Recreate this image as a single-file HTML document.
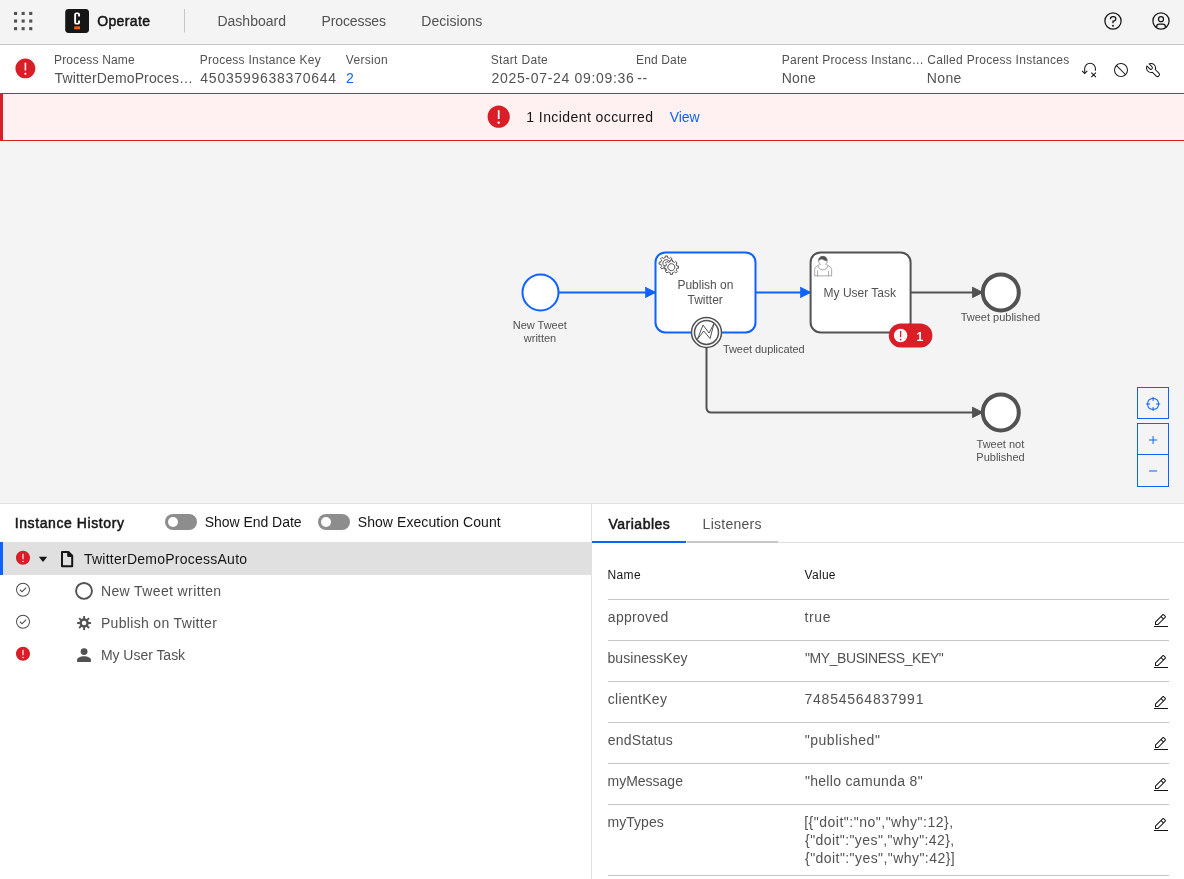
<!DOCTYPE html>
<html lang="en">
<head>
<meta charset="utf-8">
<title>Operate: Process Instance 4503599638370644 of TwitterDemoProcessAuto</title>
<style>
html,body{margin:0;padding:0}
body{width:1184px;height:879px;overflow:hidden;background:#fff;position:relative;font-family:"Liberation Sans",sans-serif}
#app{position:absolute;left:0;top:0;width:1184px;height:879px;overflow:hidden;will-change:transform}
.abs{position:absolute;display:block;overflow:visible}
.t{position:absolute;white-space:pre;line-height:20px;font-weight:400}
.hdr{position:absolute;left:0;top:0;width:1184px;height:44px;background:#f4f4f4;border-bottom:1px solid #c6c6c6}
.ihdr{position:absolute;left:0;top:45px;width:1184px;height:48px;background:#fff}
.banner{position:absolute;left:0;top:93px;width:1181px;height:46px;background:#fff1f1;border-top:1px solid #da1e28;border-bottom:1px solid #da1e28;border-left:3px solid #da1e28}
.diagram{position:absolute;left:0;top:141px;width:1184px;height:362px;background:#f4f4f4}
.bottom{position:absolute;left:0;top:503px;width:1184px;height:375px;background:#fff;border-top:1px solid #e0e0e0}
.vsplit{position:absolute;left:591px;top:504px;width:1px;height:375px;background:#e0e0e0}
.toggle{position:absolute;width:32px;height:16px;border-radius:8px;background:#8d8d8d}
.toggle i{position:absolute;left:3px;top:3px;width:10px;height:10px;border-radius:5px;background:#fff}
.rowsel{position:absolute;left:0;top:542px;width:588px;height:33px;background:#e0e0e0;border-left:3px solid #0f62fe}
.tabline{position:absolute;left:592px;top:542px;width:592px;height:1px;background:#e0e0e0}
.tabsel{position:absolute;left:592px;top:541px;width:94px;height:2px;background:#0f62fe}
.tabuns{position:absolute;left:687px;top:541px;width:91px;height:2px;background:#c6c6c6}
.rl{position:absolute;left:608px;width:561px;height:1px;background:#c6c6c6}
.g{display:contents}
a.t{text-decoration:none}
</style>
</head>
<body>
<div id="app">
<header class="g">
<!-- ===== top header ===== -->
<div class="hdr"></div>
<svg class="abs" style="left:0;top:0" width="200" height="45" viewBox="0 0 200 45">
  <g fill="#525252">
    <rect x="14.0" y="11.9" width="3.1" height="3.1"/><rect x="21.6" y="11.9" width="3.1" height="3.1"/><rect x="29.2" y="11.9" width="3.1" height="3.1"/>
    <rect x="14.0" y="19.5" width="3.1" height="3.1"/><rect x="21.6" y="19.5" width="3.1" height="3.1"/><rect x="29.2" y="19.5" width="3.1" height="3.1"/>
    <rect x="14.0" y="27.1" width="3.1" height="3.1"/><rect x="21.6" y="27.1" width="3.1" height="3.1"/><rect x="29.2" y="27.1" width="3.1" height="3.1"/>
  </g>
  <rect x="65.2" y="9" width="23.8" height="24" rx="3.4" fill="#161616"/>
  <path d="M80,16.600 V14.600 a2.200,2.200 0 0 0 -2.200,-2.200 h-1.400 a2.200,2.200 0 0 0 -2.200,2.200 V22.400 a2.200,2.200 0 0 0 2.200,2.200 h1.400 a2.200,2.200 0 0 0 2.200,-2.200 V20.400 h-1.900 V22.300 a0.600,0.600 0 0 1 -0.600,0.600 h-0.800 a0.600,0.600 0 0 1 -0.600,-0.600 V14.700 a0.600,0.600 0 0 1 0.600,-0.600 h0.800 a0.600,0.600 0 0 1 0.600,0.600 V16.600 z" fill="#fff"/>
  <rect x="74.2" y="26.4" width="5.8" height="2.9" fill="#fc5d0d"/>
  <rect x="184" y="9" width="1" height="23.5" fill="#c6c6c6"/>
</svg>
<svg class="abs" style="left:1103.1px;top:11px" width="20" height="20" viewBox="0 0 32 32" fill="#161616">
  <path d="M16,2A14,14,0,1,0,30,16,14,14,0,0,0,16,2Zm0,26A12,12,0,1,1,28,16,12,12,0,0,1,16,28Z"/><circle cx="16" cy="23.5" r="1.5"/><path d="M17,8H15.5A4.49,4.49,0,0,0,11,12.5V13h2v-.5A2.5,2.5,0,0,1,15.500,10H17a2.5,2.5,0,0,1,0,5H15v4.500h2V17a4.500,4.500,0,0,0,0-9Z"/>
</svg>
<svg class="abs" style="left:1151.1px;top:11px" width="20" height="20" viewBox="0 0 32 32" fill="#161616">
  <path d="M16,8a5,5,0,1,0,5,5A5,5,0,0,0,16,8Zm0,8a3,3,0,1,1,3-3A3.0034,3.0034,0,0,1,16,16Z"/><path d="M16,2A14,14,0,1,0,30,16,14.0158,14.0158,0,0,0,16,2ZM10,26.3765V25a3.0033,3.0033,0,0,1,3-3h6a3.0033,3.0033,0,0,1,3,3v1.3765a11.8989,11.8989,0,0,1-12,0Zm13.9925-1.4507A5.0016,5.0016,0,0,0,19,20H13a5.0016,5.0016,0,0,0-4.9925,4.9258,12,12,0,1,1,15.985,0Z"/>
</svg>

<nav class="g">
<span class="t" style="left:97.23px;top:11px;font-size:14px;-webkit-text-stroke:0.5px #161616;color:#161616;letter-spacing:0.356px">Operate</span>
<a class="t" style="left:217.42px;top:11px;font-size:14.0px;color:#525252;letter-spacing:0.021px">Dashboard</a>
<a class="t" style="left:321.42px;top:11px;font-size:14.0px;color:#525252;letter-spacing:-0.094px">Processes</a>
<a class="t" style="left:421.32px;top:11px;font-size:14.0px;color:#525252;letter-spacing:0.043px">Decisions</a>
</nav>
</header>
<main class="g">
<section class="g">
<!-- ===== instance header ===== -->
<div class="ihdr"></div>
<svg class="abs" style="left:14.05px;top:56.95px" width="22.8" height="22.8" viewBox="0 0 32 32"><circle cx="16" cy="16" r="12" fill="#fff"/><path fill="#da1e28" d="M16,2C8.3,2,2,8.3,2,16s6.300,14,14,14s14-6.300,14-14C30,8.300,23.700,2,16,2z M14.900,8h2.200v11h-2.200V8z M16,25c-0.800,0-1.500-0.700-1.500-1.500S15.200,22,16,22c0.800,0,1.500,0.700,1.500,1.500S16.800,25,16,25z"/></svg>
<!-- retry -->
<svg class="abs" style="left:1078px;top:58px" width="24" height="24" viewBox="1078 58 24 24" fill="none" stroke="#161616" stroke-width="1.05">
  <path d="M1084.7,73.3 V68.55 A5.35,5.35 0 0 1 1095.4,68.55 V70.7"/>
  <path d="M1082.1,70.9 L1084.7,73.5 L1087.3,70.9"/>
  <path d="M1091.3,72.6 L1095.9,77.2 M1095.9,72.6 L1091.3,77.200"/>
</svg>
<!-- cancel -->
<svg class="abs" style="left:1113.1px;top:61.9px" width="16" height="16" viewBox="0 0 32 32" fill="#161616">
  <path d="M2,16H2A14,14,0,1,0,16,2,14,14,0,0,0,2,16Zm23.150,7.750L8.250,6.850a12,12,0,0,1,16.900,16.900ZM8.240,25.160A12,12,0,0,1,6.840,8.270L23.730,25.160a12,12,0,0,1-15.490,0Z"/>
</svg>
<!-- wrench -->
<svg class="abs" style="left:1145.2px;top:61.8px" width="16" height="16" viewBox="0 0 32 32" fill="#161616">
  <path d="M12.100,2A9.800,9.800,0,0,0,6.700,3.600L13.100,10a2.100,2.100,0,0,1,.2,3,2.100,2.100,0,0,1-3-.2L3.700,6.400A9.840,9.840,0,0,0,2,12.100,10.140,10.140,0,0,0,12.100,22.200a10.900,10.900,0,0,0,2.600-.3l6.700,6.700a5,5,0,0,0,7.100-7.100l-6.700-6.700a10.900,10.900,0,0,0,.3-2.600A10,10,0,0,0,12.100,2Zm8,10.100a7.610,7.610,0,0,1-.3,2.100l-.3,1.100.8.800L27,22.800a2.880,2.880,0,0,1,.9,2.100A2.720,2.720,0,0,1,27,27a2.900,2.900,0,0,1-4.200,0l-6.700-6.700-.8-.8-1.100.3a7.610,7.610,0,0,1-2.100.3,8.270,8.270,0,0,1-5.700-2.300A7.630,7.630,0,0,1,4,12.100a8.330,8.330,0,0,1,.3-2.200l4.400,4.400a4.140,4.140,0,0,0,5.900.2,4.140,4.140,0,0,0-.2-5.900L10,4.200a6.450,6.450,0,0,1,2-.3,8.270,8.270,0,0,1,5.700,2.300A8.490,8.490,0,0,1,20.100,12.100Z"/>
</svg>

<span class="t" style="left:54.00px;top:50px;font-size:12.0px;color:#525252;letter-spacing:0.184px">Process Name</span>
<span class="t" style="left:54.47px;top:68px;font-size:14.0px;color:#525252;letter-spacing:0.145px">TwitterDemoProces…</span>
<span class="t" style="left:199.70px;top:50px;font-size:12.0px;color:#525252;letter-spacing:0.26px">Process Instance Key</span>
<span class="t" style="left:200.35px;top:68px;font-size:14.0px;color:#525252;letter-spacing:0.74px">4503599638370644</span>
<span class="t" style="left:345.85px;top:50px;font-size:12.0px;color:#525252;letter-spacing:0.317px">Version</span>
<a class="t" style="left:345.99px;top:68px;font-size:14.0px;color:#0f62fe;letter-spacing:0.0px">2</a>
<span class="t" style="left:490.81px;top:50px;font-size:12.0px;color:#525252;letter-spacing:0.323px">Start Date</span>
<span class="t" style="left:491.49px;top:68px;font-size:14.0px;color:#525252;letter-spacing:0.682px">2025-07-24 09:09:36</span>
<span class="t" style="left:636.10px;top:50px;font-size:12.0px;color:#525252;letter-spacing:0.131px">End Date</span>
<span class="t" style="left:637.26px;top:68px;font-size:14.0px;color:#525252;letter-spacing:0.567px">--</span>
<span class="t" style="left:781.70px;top:50px;font-size:12.0px;color:#525252;letter-spacing:0.271px">Parent Process Instanc…</span>
<span class="t" style="left:781.82px;top:68px;font-size:14.0px;color:#525252;letter-spacing:0.153px">None</span>
<span class="t" style="left:927.26px;top:50px;font-size:12.0px;color:#525252;letter-spacing:0.289px">Called Process Instances</span>
<span class="t" style="left:926.72px;top:68px;font-size:14.0px;color:#525252;letter-spacing:0.394px">None</span>
</section>
<section class="g">
<!-- ===== incident banner ===== -->
<div class="banner"></div>
<svg class="abs" style="left:486.15px;top:104.3px" width="25.4" height="25.4" viewBox="0 0 32 32"><circle cx="16" cy="16" r="12" fill="#fff"/><path fill="#da1e28" d="M16,2C8.3,2,2,8.3,2,16s6.300,14,14,14s14-6.300,14-14C30,8.300,23.700,2,16,2z M14.900,8h2.200v11h-2.200V8z M16,25c-0.800,0-1.500-0.700-1.500-1.500S15.200,22,16,22c0.800,0,1.500,0.700,1.500,1.500S16.800,25,16,25z"/></svg>
<span class="t" style="left:526.32px;top:107px;font-size:14.0px;color:#161616;letter-spacing:0.421px">1 Incident occurred</span>
<a class="t" style="left:669.82px;top:107px;font-size:14.0px;color:#0f62fe;letter-spacing:-0.095px">View</a>
</section>
<section class="g">
<!-- ===== diagram ===== -->
<div class="diagram"></div>
<svg class="abs" style="left:0;top:141px" width="1184" height="362" viewBox="0 141 1184 362" font-family="'Liberation Sans', Arial, sans-serif">
  <defs>
    <marker id="mk-b" viewBox="0 0 20 20" refX="11" refY="10" markerWidth="10" markerHeight="10" orient="auto">
      <path d="M 1 5 L 11 10 L 1 15 Z" fill="#0f62fe" stroke="#0f62fe" stroke-width="1" stroke-linecap="round"/>
    </marker>
    <marker id="mk-g" viewBox="0 0 20 20" refX="11" refY="10" markerWidth="10" markerHeight="10" orient="auto">
      <path d="M 1 5 L 11 10 L 1 15 Z" fill="#525252" stroke="#525252" stroke-width="1" stroke-linecap="round"/>
    </marker>
  </defs>
  <!-- sequence flows -->
  <g fill="none" stroke-width="2" stroke-linejoin="round" stroke-linecap="round">
    <path d="M558.5,292.4 L655.5,292.4" stroke="#0f62fe" marker-end="url(#mk-b)"/>
    <path d="M755.5,292.4 L810.6,292.4" stroke="#0f62fe" marker-end="url(#mk-b)"/>
    <path d="M910.6,292.4 L982.8,292.4" stroke="#525252" marker-end="url(#mk-g)"/>
    <path d="M706.5,347.4 L706.5,407.4 Q706.5,412.4 711.5,412.4 L982.8,412.4" stroke="#525252" marker-end="url(#mk-g)"/>
  </g>
  <!-- start event -->
  <circle cx="540.5" cy="292.4" r="18" fill="#fff" stroke="#0f62fe" stroke-width="2"/>
  <text font-size="11" fill="#525252" text-anchor="middle"><tspan x="539.8" y="329">New Tweet</tspan><tspan x="540" y="341.7">written</tspan></text>
  <!-- service task -->
  <g transform="translate(655.5 252.4)">
    <rect x="0" y="0" width="100" height="80" rx="10" ry="10" fill="#fff" stroke="#0f62fe" stroke-width="2"/>
    <path d="m 12,18 v -1.71335 c 0.352326,-0.0705 0.703932,-0.17838 1.047628,-0.32133 0.344416,-0.14465 0.665822,-0.32133 0.966377,-0.52145 l 1.19431,1.18005 1.567487,-1.57688 -1.195028,-1.18014 c 0.403376,-0.61394 0.683079,-1.29908 0.825447,-2.01824 l 1.622133,-0.01 v -2.2196 l -1.636514,0.01 c -0.07333,-0.35153 -0.178319,-0.70024 -0.323564,-1.04372 -0.145244,-0.34406 -0.321407,-0.6644 -0.522735,-0.96217 l 1.131035,-1.13631 -1.583305,-1.56293 -1.129598,1.13589 c -0.614052,-0.40108 -1.302883,-0.68093 -2.022633,-0.82247 l 0.0093,-1.61852 h -2.241173 l 0.0042,1.63124 c -0.353763,0.0736 -0.705369,0.17977 -1.049785,0.32371 -0.344415,0.14437 -0.665102,0.32092 -0.9635006,0.52046 l -1.1698628,-1.15823 -1.5667691,1.5792 1.1684265,1.15669 c -0.4026573,0.61283 -0.68308,1.29797 -0.8247287,2.01713 l -1.6588041,0.003 v 2.22174 l 1.6724648,-0.006 c 0.073327,0.35077 0.1797598,0.70243 0.3242851,1.04472 0.1452428,0.34448 0.3214064,0.6644 0.5227339,0.96066 l -1.1993431,1.19723 1.5840256,1.56011 1.1964668,-1.19348 c 0.6140517,0.40346 1.3028827,0.68232 2.0233517,0.82331 l 7.19e-4,1.69892 h 2.226848 z m 0.221462,-3.9957 c -1.788948,0.7502 -3.8576,-0.0928 -4.6097055,-1.87438 -0.7521065,-1.78321 0.090598,-3.84627 1.8802645,-4.59604 1.78823,-0.74936 3.856881,0.0929 4.608987,1.87437 0.752106,1.78165 -0.0906,3.84612 -1.879546,4.59605 z" fill="#fff" stroke="#525252" stroke-width="1"/>
    <path d="m 17.2,18 c -1.788948,0.7502 -3.8576,-0.0928 -4.6097055,-1.87438 -0.7521065,-1.78321 0.090598,-3.84627 1.8802645,-4.59604 1.78823,-0.74936 3.856881,0.0929 4.608987,1.87437 0.752106,1.78165 -0.0906,3.84612 -1.879546,4.59605 z" fill="#fff" stroke="none"/>
    <path d="m 17,22 v -1.71335 c 0.352326,-0.0705 0.703932,-0.17838 1.047628,-0.32133 0.344416,-0.14465 0.665822,-0.32133 0.966377,-0.52145 l 1.19431,1.18005 1.567487,-1.57688 -1.195028,-1.18014 c 0.403376,-0.61394 0.683079,-1.29908 0.825447,-2.01824 l 1.622133,-0.01 v -2.2196 l -1.636514,0.01 c -0.07333,-0.35153 -0.178319,-0.70024 -0.323564,-1.04372 -0.145244,-0.34406 -0.321407,-0.6644 -0.522735,-0.96217 l 1.131035,-1.13631 -1.583305,-1.56293 -1.129598,1.13589 c -0.614052,-0.40108 -1.302883,-0.68093 -2.022633,-0.82247 l 0.0093,-1.61852 h -2.241173 l 0.0042,1.63124 c -0.353763,0.0736 -0.705369,0.17977 -1.049785,0.32371 -0.344415,0.14437 -0.665102,0.32092 -0.9635006,0.52046 l -1.1698628,-1.15823 -1.5667691,1.5792 1.1684265,1.15669 c -0.4026573,0.61283 -0.68308,1.29797 -0.8247287,2.01713 l -1.6588041,0.003 v 2.22174 l 1.6724648,-0.006 c 0.073327,0.35077 0.1797598,0.70243 0.3242851,1.04472 0.1452428,0.34448 0.3214064,0.6644 0.5227339,0.96066 l -1.1993431,1.19723 1.5840256,1.56011 1.1964668,-1.19348 c 0.6140517,0.40346 1.3028827,0.68232 2.0233517,0.82331 l 7.19e-4,1.69892 h 2.226848 z m 0.221462,-3.9957 c -1.788948,0.7502 -3.8576,-0.0928 -4.6097055,-1.87438 -0.7521065,-1.78321 0.090598,-3.84627 1.8802645,-4.59604 1.78823,-0.74936 3.856881,0.0929 4.608987,1.87437 0.752106,1.78165 -0.0906,3.84612 -1.879546,4.59605 z" fill="#fff" stroke="#525252" stroke-width="1"/>
  </g>
  <text font-size="12" fill="#525252" text-anchor="middle"><tspan x="705.4" y="288.7">Publish on</tspan><tspan x="705.2" y="303.8">Twitter</tspan></text>
  <!-- user task -->
  <g transform="translate(810.6 252.4)">
    <rect x="0" y="0" width="100" height="80" rx="10" ry="10" fill="#fff" stroke="#525252" stroke-width="2"/>
    <path d="m 15,12 c 0.909,-0.845 1.594,-2.049 1.594,-3.385 0,-2.554 -1.805,-4.62199999 -4.357,-4.62199999 -2.55199998,0 -4.28799998,2.06799999 -4.28799998,4.62199999 0,1.348 0.974,2.562 1.89599998,3.405 -0.52899998,0.187 -5.669,2.097 -5.794,4.7560005 v 6.718 h 17 v -6.718 c 0,-2.2980005 -5.5279996,-4.5950005 -6.0509996,-4.7760005 z m -8,6 l 0,5.5 m 11,0 l 0,-5" fill="#fff" stroke="#525252" stroke-width="0.5"/>
    <path d="m 15,12 m 2.162,1.009 c 0,2.4470005 -2.158,4.4310005 -4.821,4.4310005 -2.66499998,0 -4.822,-1.981 -4.822,-4.4310005 " fill="#fff" stroke="#525252" stroke-width="0.5"/>
    <path d="m 15,12 m -6.9,-3.80 c 0,0 2.25099998,-2.358 4.27399998,-1.177 2.024,1.181 4.221,1.537 4.124,0.965 -0.098,-0.57 -0.117,-3.79099999 -4.191,-4.13599999 -3.57499998,0.001 -4.20799998,3.36699999 -4.20699998,4.34799999 z" fill="#525252" stroke="#525252" stroke-width="0.5"/>
  </g>
  <text font-size="12" fill="#525252" text-anchor="middle" x="859.8" y="296.7">My User Task</text>
  <!-- end events -->
  <circle cx="1000.8" cy="292.4" r="18" fill="#fff" stroke="#525252" stroke-width="4"/>
  <text font-size="11" fill="#525252" text-anchor="middle" x="1000.4" y="321">Tweet published</text>
  <circle cx="1000.8" cy="412.4" r="18" fill="#fff" stroke="#525252" stroke-width="4"/>
  <text font-size="11" fill="#525252" text-anchor="middle"><tspan x="1000.4" y="447.8">Tweet not</tspan><tspan x="1000.5" y="461">Published</tspan></text>
  <!-- boundary error event -->
  <g transform="translate(691.5 317.4)">
    <circle cx="15" cy="15" r="15" fill="#fff" stroke="#525252" stroke-width="1.5"/>
    <circle cx="15" cy="15" r="12" fill="none" stroke="#525252" stroke-width="1.5"/>
    <path d="m 6,21.66 0.078,-0.021 6.116,-8.009 6.389,7.472 3.917,-15.184 -4.892,9.708 -6.083,-7.988 z" fill="#fff" stroke="#525252" stroke-width="1"/>
  </g>
  <text font-size="11" fill="#525252" x="722.9" y="353.2" letter-spacing="-0.05">Tweet duplicated</text>
  <!-- incident badge -->
  <rect x="888.8" y="323.4" width="43.6" height="24.2" rx="12.1" fill="#da1e28"/>
  <circle cx="900.6" cy="335.5" r="6.7" fill="#fff"/>
  <rect x="899.95" y="331" width="1.3" height="6.2" fill="#da1e28"/>
  <rect x="899.85" y="338.8" width="1.5" height="1.6" fill="#da1e28"/>
  <text font-size="12" font-weight="700" fill="#fff" x="916.6" y="340.7">1</text>
  <!-- zoom controls -->
  <g fill="#f4f4f4" stroke="#0f62fe" stroke-width="1">
    <rect x="1137.5" y="387.5" width="31" height="31"/>
    <rect x="1137.5" y="423.5" width="31" height="31"/>
    <rect x="1137.5" y="454.5" width="31" height="32"/>
  </g>
  <svg x="1145.1" y="395.9" width="16" height="16" viewBox="0 0 32 32" fill="#0f62fe">
    <path d="M30,15H27.949A12.007,12.007,0,0,0,17,4.051V2H15V4.051A12.007,12.007,0,0,0,4.051,15H2v2H4.051A12.007,12.007,0,0,0,15,27.949V30h2V27.949A12.007,12.007,0,0,0,27.949,17H30ZM17,25.949V22H15v3.949A10.017,10.017,0,0,1,6.051,17H10V15H6.051A10.017,10.017,0,0,1,15,6.051V10h2V6.051A10.017,10.017,0,0,1,25.949,15H22v2h3.949A10.017,10.017,0,0,1,17,25.949Z"/>
  </svg>
  <svg x="1145.1" y="432" width="16" height="16" viewBox="0 0 32 32" fill="#0f62fe"><path d="M17 15L17 8 15 8 15 15 8 15 8 17 15 17 15 24 17 24 17 17 24 17 24 15z"/></svg>
  <svg x="1145.1" y="463" width="16" height="16" viewBox="0 0 32 32" fill="#0f62fe"><path d="M8 15H24V17H8z"/></svg>
</svg>
</section>
<section class="g">
<!-- ===== bottom panel ===== -->
<div class="bottom"></div>
<div class="vsplit"></div>
<!-- instance history -->
<div class="toggle" style="left:165px;top:514px"><i></i></div>
<div class="toggle" style="left:318px;top:514px"><i></i></div>
<div class="rowsel"></div>
<svg class="abs" style="left:0;top:540px" width="110" height="130" viewBox="0 540 110 130">
  <!-- state icons -->
  <svg x="15" y="549.8" width="16" height="16" viewBox="0 0 32 32"><circle cx="16" cy="16" r="12" fill="#fff"/><path fill="#da1e28" d="M16,2C8.3,2,2,8.3,2,16s6.300,14,14,14s14-6.300,14-14C30,8.300,23.700,2,16,2z M14.900,8h2.200v11h-2.200V8z M16,25c-0.800,0-1.500-0.700-1.500-1.500S15.200,22,16,22c0.800,0,1.500,0.700,1.500,1.500S16.800,25,16,25z"/></svg>
  <svg x="15" y="581.8" width="16" height="16" viewBox="0 0 32 32"><path fill="#4a4a4a" d="M14 21.414L9 16.413 10.413 15 14 18.586 21.585 11 23 12.415 14 21.414z M16,2A14,14,0,1,0,30,16,14,14,0,0,0,16,2Zm0,26A12,12,0,1,1,28,16,12,12,0,0,1,16,28Z"/></svg>
  <svg x="15" y="613.8" width="16" height="16" viewBox="0 0 32 32"><path fill="#4a4a4a" d="M14 21.414L9 16.413 10.413 15 14 18.586 21.585 11 23 12.415 14 21.414z M16,2A14,14,0,1,0,30,16,14,14,0,0,0,16,2Zm0,26A12,12,0,1,1,28,16,12,12,0,0,1,16,28Z"/></svg>
  <svg x="15" y="645.8" width="16" height="16" viewBox="0 0 32 32"><circle cx="16" cy="16" r="12" fill="#fff"/><path fill="#da1e28" d="M16,2C8.3,2,2,8.3,2,16s6.300,14,14,14s14-6.300,14-14C30,8.300,23.700,2,16,2z M14.900,8h2.200v11h-2.200V8z M16,25c-0.800,0-1.500-0.700-1.500-1.500S15.200,22,16,22c0.800,0,1.500,0.700,1.500,1.500S16.800,25,16,25z"/></svg>
  <!-- caret -->
  <path d="M38.8,556.8 L47.2,556.8 L43,562 Z" fill="#161616"/>
  <!-- document -->
  <path d="M62,552 H68.400 L72.200,555.800 V566.200 H62 Z M68.200,552.200 V556 H72" fill="none" stroke="#161616" stroke-width="2" stroke-linejoin="round"/>
  <!-- start event icon -->
  <circle cx="84" cy="590.9" r="7.95" fill="none" stroke="#525252" stroke-width="1.9"/>
  <!-- gear icon -->
  <g transform="translate(84.1 623.05)" fill="#525252">
    <rect x="-0.95" y="-7" width="1.9" height="14"/>
    <rect x="-0.95" y="-7" width="1.9" height="14" transform="rotate(45)"/>
    <rect x="-0.95" y="-7" width="1.9" height="14" transform="rotate(90)"/>
    <rect x="-0.95" y="-7" width="1.9" height="14" transform="rotate(135)"/>
    <circle r="4.7"/>
    <circle r="2.3" fill="#fff"/>
  </g>
  <!-- user icon -->
  <g fill="#525252">
    <circle cx="84.1" cy="651.6" r="3.45"/>
    <path d="M77.100,662 V659.800 C77.100,657.500 81,656.200 84,656.200 C87,656.200 90.900,657.500 90.900,659.800 V662 Z"/>
  </g>
</svg>
<span class="t" style="left:14.77px;top:513px;font-size:14px;-webkit-text-stroke:0.5px #161616;color:#161616;letter-spacing:0.587px">Instance History</span>
<span class="t" style="left:204.73px;top:512px;font-size:14.0px;color:#161616;letter-spacing:-0.037px">Show End Date</span>
<span class="t" style="left:357.73px;top:512px;font-size:14.0px;color:#161616;letter-spacing:0.071px">Show Execution Count</span>
<span class="t" style="left:83.97px;top:549px;font-size:14.0px;color:#161616;letter-spacing:0.246px">TwitterDemoProcessAuto</span>
<span class="t" style="left:100.92px;top:581px;font-size:14.0px;color:#525252;letter-spacing:0.381px">New Tweet written</span>
<span class="t" style="left:100.92px;top:613px;font-size:14.0px;color:#525252;letter-spacing:0.332px">Publish on Twitter</span>
<span class="t" style="left:100.92px;top:645px;font-size:14.0px;color:#525252;letter-spacing:-0.031px">My User Task</span>
</section>
<section class="g">
<!-- variables panel -->
<div class="tabline"></div>
<div class="tabsel"></div>
<div class="tabuns"></div>
<div class="rl" style="top:599px"></div>
<div class="rl" style="top:640px"></div>
<div class="rl" style="top:681px"></div>
<div class="rl" style="top:722px"></div>
<div class="rl" style="top:763px"></div>
<div class="rl" style="top:804px"></div>
<div class="rl" style="top:875px"></div>
<span class="t" style="left:608.49px;top:514px;font-size:14px;-webkit-text-stroke:0.5px #161616;color:#161616;letter-spacing:0.504px">Variables</span>
<span class="t" style="left:702.62px;top:514px;font-size:14.0px;color:#525252;letter-spacing:0.267px">Listeners</span>
<span class="t" style="left:607.50px;top:565px;font-size:12.0px;color:#161616;letter-spacing:0.388px">Name</span>
<span class="t" style="left:804.55px;top:565px;font-size:12.0px;color:#161616;letter-spacing:0.296px">Value</span>
<span class="t" style="left:607.85px;top:607px;font-size:14.0px;color:#525252;letter-spacing:0.289px">approved</span>
<span class="t" style="left:804.56px;top:607px;font-size:14.0px;color:#525252;letter-spacing:0.619px">true</span>
<span class="t" style="left:607.50px;top:648px;font-size:14.0px;color:#525252;letter-spacing:0.061px">businessKey</span>
<span class="t" style="left:804.88px;top:648px;font-size:14.0px;color:#525252;letter-spacing:-0.4px">"MY_BUSINESS_KEY"</span>
<span class="t" style="left:607.85px;top:689px;font-size:14.0px;color:#525252;letter-spacing:0.279px">clientKey</span>
<span class="t" style="left:804.48px;top:689px;font-size:14.0px;color:#525252;letter-spacing:0.768px">74854564837991</span>
<span class="t" style="left:607.85px;top:730px;font-size:14.0px;color:#525252;letter-spacing:0.223px">endStatus</span>
<span class="t" style="left:804.68px;top:730px;font-size:14.0px;color:#525252;letter-spacing:0.532px">"published"</span>
<span class="t" style="left:607.50px;top:771px;font-size:14.0px;color:#525252;letter-spacing:-0.007px">myMessage</span>
<span class="t" style="left:804.88px;top:771px;font-size:14.0px;color:#525252;letter-spacing:0.317px">"hello camunda 8"</span>
<span class="t" style="left:607.50px;top:812px;font-size:14.0px;color:#525252;letter-spacing:0.04px">myTypes</span>
<span class="t" style="left:804.20px;top:812px;font-size:14.0px;color:#525252;letter-spacing:0.506px">[{"doit":"no","why":12},</span>
<span class="t" style="left:805.05px;top:830px;font-size:14.0px;color:#525252;letter-spacing:0.42px">{"doit":"yes","why":42},</span>
<span class="t" style="left:805.05px;top:848px;font-size:14.0px;color:#525252;letter-spacing:0.436px">{"doit":"yes","why":42}]</span>
<svg class="abs" style="left:1153.1px;top:612.9px" width="16" height="16" viewBox="0 0 32 32" fill="#161616"><path d="M2 26H30V28H2zM25.400 9c.8-.8.8-2 0-2.800 0 0 0 0 0 0l-3.600-3.600c-.8-.8-2-.8-2.800 0 0 0 0 0 0 0l-15 15V24h6.400L25.400 9zM20.400 4L24 7.600l-3 3L17.400 7 20.400 4zM6 22v-3.600l10-10 3.600 3.600-10 10H6z"/></svg><svg class="abs" style="left:1153.1px;top:653.8px" width="16" height="16" viewBox="0 0 32 32" fill="#161616"><path d="M2 26H30V28H2zM25.400 9c.8-.8.8-2 0-2.800 0 0 0 0 0 0l-3.600-3.600c-.8-.8-2-.8-2.800 0 0 0 0 0 0 0l-15 15V24h6.400L25.400 9zM20.400 4L24 7.600l-3 3L17.400 7 20.400 4zM6 22v-3.600l10-10 3.600 3.600-10 10H6z"/></svg><svg class="abs" style="left:1153.1px;top:694.7px" width="16" height="16" viewBox="0 0 32 32" fill="#161616"><path d="M2 26H30V28H2zM25.400 9c.8-.8.8-2 0-2.800 0 0 0 0 0 0l-3.600-3.600c-.8-.8-2-.8-2.800 0 0 0 0 0 0 0l-15 15V24h6.400L25.400 9zM20.400 4L24 7.600l-3 3L17.400 7 20.400 4zM6 22v-3.600l10-10 3.600 3.600-10 10H6z"/></svg><svg class="abs" style="left:1153.1px;top:735.6px" width="16" height="16" viewBox="0 0 32 32" fill="#161616"><path d="M2 26H30V28H2zM25.400 9c.8-.8.8-2 0-2.800 0 0 0 0 0 0l-3.600-3.600c-.8-.8-2-.8-2.800 0 0 0 0 0 0 0l-15 15V24h6.400L25.400 9zM20.400 4L24 7.600l-3 3L17.400 7 20.400 4zM6 22v-3.600l10-10 3.600 3.600-10 10H6z"/></svg><svg class="abs" style="left:1153.1px;top:776.5px" width="16" height="16" viewBox="0 0 32 32" fill="#161616"><path d="M2 26H30V28H2zM25.400 9c.8-.8.8-2 0-2.800 0 0 0 0 0 0l-3.600-3.600c-.8-.8-2-.8-2.800 0 0 0 0 0 0 0l-15 15V24h6.400L25.400 9zM20.400 4L24 7.600l-3 3L17.400 7 20.400 4zM6 22v-3.600l10-10 3.600 3.600-10 10H6z"/></svg><svg class="abs" style="left:1153.1px;top:817.4px" width="16" height="16" viewBox="0 0 32 32" fill="#161616"><path d="M2 26H30V28H2zM25.400 9c.8-.8.8-2 0-2.800 0 0 0 0 0 0l-3.600-3.600c-.8-.8-2-.8-2.800 0 0 0 0 0 0 0l-15 15V24h6.400L25.400 9zM20.400 4L24 7.600l-3 3L17.400 7 20.400 4zM6 22v-3.600l10-10 3.600 3.600-10 10H6z"/></svg>
</section>
</main>
</div>
</body>
</html>
